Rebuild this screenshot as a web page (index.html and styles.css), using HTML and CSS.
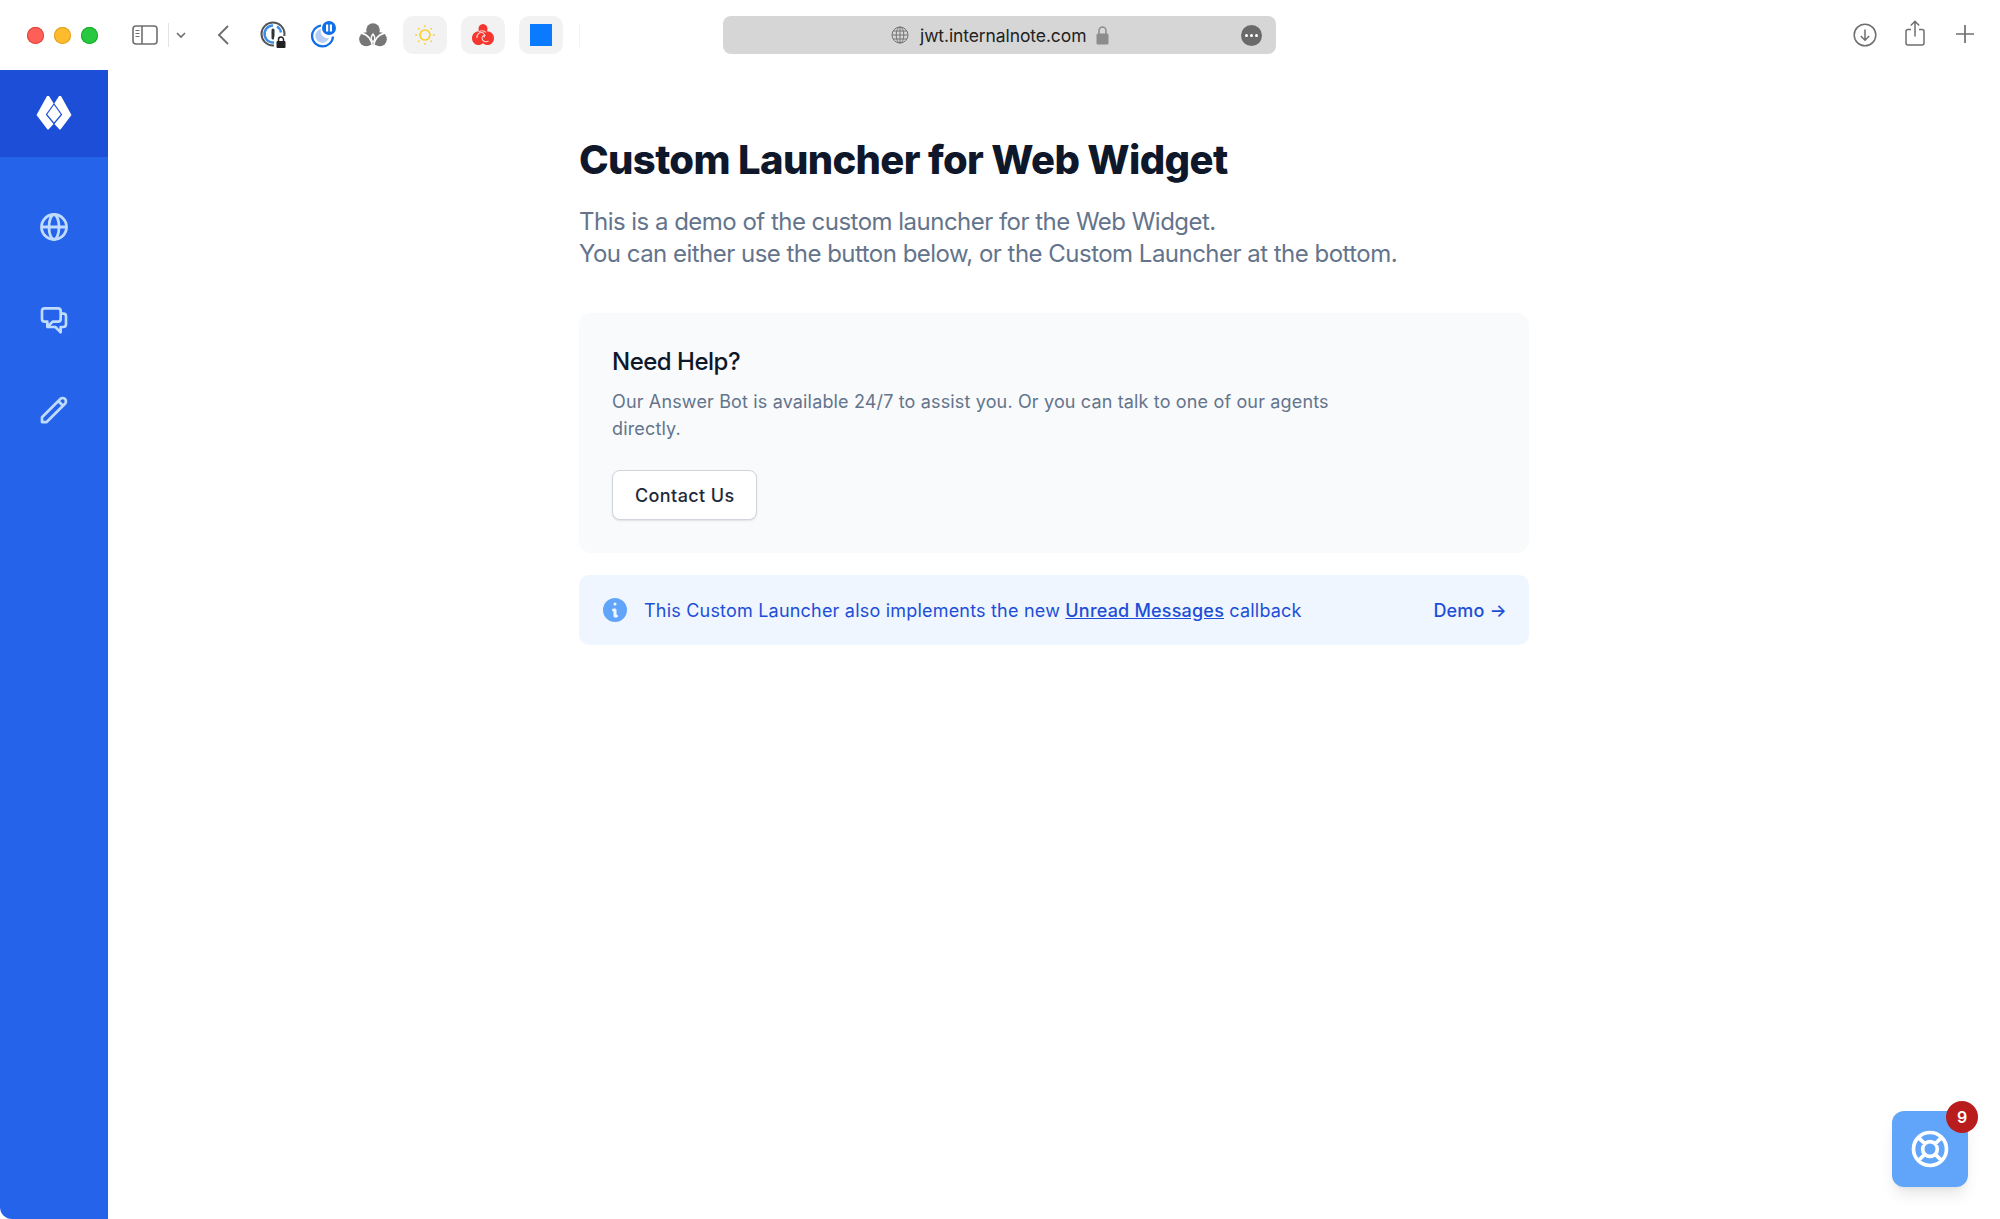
FILE: index.html
```html
<!DOCTYPE html>
<html lang="en">
<head>
<meta charset="utf-8">
<title>Custom Launcher for Web Widget</title>
<link rel="stylesheet" href="styles.css">
</head>
<body>
<header class="toolbar">
  <div class="lights">
    <span class="light light-red"></span>
    <span class="light light-yellow"></span>
    <span class="light light-green"></span>
  </div>
  <svg class="tb-sidebar" width="26" height="20" viewBox="0 0 26 20" fill="none" stroke="#6f6f6f" stroke-width="1.6">
    <rect x="1" y="1" width="24" height="18" rx="3"/><path d="M10 1v18"/><path d="M3.5 5.5h4M3.5 8.5h4M3.5 11.5h4" stroke-width="1.2"/>
  </svg>
  <span class="tb-divider"></span>
  <svg class="tb-chevron" width="10" height="7" viewBox="0 0 10 7" fill="none" stroke="#6f6f6f" stroke-width="1.6"><path d="M1 1l4 4 4-4"/></svg>
  <svg class="tb-back" width="12" height="20" viewBox="0 0 12 20" fill="none" stroke="#6f6f6f" stroke-width="1.9"><path d="M11 1L2 10l9 9"/></svg>
  <div class="extensions">
    <svg class="ext ext-pass" width="28" height="28" viewBox="0 0 28 28" fill="none">
      <circle cx="13" cy="13" r="11.5" stroke="#555" stroke-width="2"/>
      <path d="M13 4.5a8.500 8.500 0 1 0 4 16" stroke="#3b8ee8" stroke-width="2.400"/>
      <path d="M17 5.500a8.500 8.500 0 0 1 4 6" stroke="#3b8ee8" stroke-width="2.400"/>
      <rect x="11.500" y="7.500" width="3" height="11" rx="1.500" fill="#333"/>
      <rect x="14" y="15" width="14" height="13" rx="2" fill="#fff"/>
      <rect x="16.500" y="20" width="9" height="7" rx="1" fill="#222"/>
      <path d="M18.500 20v-1.500a2.500 2.500 0 0 1 5 0V20" stroke="#222" stroke-width="1.500"/>
    </svg>
    <svg class="ext ext-moon" width="28" height="28" viewBox="0 0 28 28" fill="none">
      <path d="M12 3.500a10.500 10.500 0 1 0 12 11" stroke="#0f6fe8" stroke-width="2.200" transform="translate(0 1)"/>
      <path d="M12 8a7 7 0 1 0 8 9 7 7 0 0 1-8-9z" fill="#b6cdf5"/>
      <circle cx="20" cy="7" r="7" fill="#0f6fe8"/>
      <rect x="17" y="3.500" width="2.200" height="7" fill="#fff"/><rect x="20.800" y="3.500" width="2.200" height="7" fill="#fff"/>
    </svg>
    <svg class="ext ext-leaf" width="28" height="24" viewBox="0 0 28 24" fill="#777">
      <circle cx="14" cy="7" r="6.800"/>
      <circle cx="7.200" cy="16.200" r="7"/>
      <circle cx="20.800" cy="16.200" r="7"/>
      <path fill="#777" d="M9 12h10v8l-5 3-5-3z"/>
      <path fill="none" stroke="#fff" stroke-width="1.500" d="M13.400 23.500C13 17 9 11.500 3 10.500M14.600 23.500C15 17 19 11.500 25 10.500"/>
      <path fill="none" stroke="#fff" stroke-width="1.300" d="M14 19c-2.500-2.500-2.500-5 0-8 2.500 3 2.500 5.500 0 8z"/>
    </svg>
    <span class="tile">
      <svg width="20" height="20" viewBox="0 0 20 20" fill="none" stroke="#fbcf33">
        <circle cx="10" cy="10" r="5" stroke-width="1.700"/>
        <path stroke-width="1.500" stroke-linecap="round" d="M10 .8v.8M10 18.400v.8M.8 10h.8M18.400 10h.8M3.500 3.500l.5.500M16 16l.5.500M3.500 16.500L4 16M16 4l.5-.5"/>
      </svg>
    </span>
    <span class="tile">
      <svg width="24" height="24" viewBox="0 0 24 24">
        <path fill="#f4362e" d="M12 1c2.800 0 4.500 2.200 4.500 4.700 0 1-.2 1.800-.5 2.600 4 .2 7 3 7 6.900 0 3.800-3 6.800-6.500 6.800-1.800 0-3.200-.6-4.500-1.800C10.700 21.400 9.300 22 7.500 22 4 22 1 19 1 15.200c0-3.900 3-6.700 7-6.900-.3-.8-.5-1.600-.5-2.600C7.500 3.200 9.200 1 12 1z"/>
        <path fill="none" stroke="#fbd3d0" stroke-width="1.100" d="M8 9c1.500-1.500 5-2 7 .5M6 15c-.5-3 2-6 5-5.500 2.500.5 3 3 2 5M17.500 18c-2.500 1.500-6 .5-6.500-2.500-.3-2 1.500-3.500 3.500-3"/>
      </svg>
    </span>
    <span class="tile"><span class="blue-square"></span></span>
  </div>
  <span class="tb-faint"></span>
  <div class="address">
    <svg class="addr-globe" width="18" height="18" viewBox="0 0 18 18" fill="none" stroke="#757575" stroke-width="1">
      <circle cx="9" cy="9" r="8"/><ellipse cx="9" cy="9" rx="3.800" ry="8"/><path d="M9 1v16M1 9h16M2 5h14M2 13h14"/>
    </svg>
    <span class="addr-text">jwt.internalnote.com</span>
    <svg class="addr-lock" width="13" height="19" viewBox="0 0 13 19" fill="none">
      <rect x="0.500" y="7.500" width="12" height="11" rx="1.500" fill="#8c8c8c"/>
      <path d="M3 8V4.500a3.500 3.500 0 0 1 7 0V8" stroke="#8c8c8c" stroke-width="1.500"/>
    </svg>
    <span class="addr-more"><i></i><i></i><i></i></span>
  </div>
  <div class="tb-right">
    <svg width="24" height="24" viewBox="0 0 24 24" fill="none" stroke="#6f6f6f" stroke-width="1.500">
      <circle cx="12" cy="12" r="10.800"/><path d="M12 6.500v10.500M7.800 13l4.200 4.200 4.200-4.200"/>
    </svg>
    <svg class="tb-share" width="20" height="26" viewBox="0 0 20 26" fill="none" stroke="#6f6f6f" stroke-width="1.500">
      <path d="M6 9.500H3a2 2 0 0 0-2 2V23a2 2 0 0 0 2 2h14a2 2 0 0 0 2-2V11.500a2 2 0 0 0-2-2h-3"/><path d="M10 16.500V1.500M5.800 5.500L10 1.300l4.200 4.200"/>
    </svg>
    <svg class="tb-plus" width="20" height="20" viewBox="0 0 20 20" fill="none" stroke="#6f6f6f" stroke-width="1.700"><path d="M10 1v18M1 10h18"/></svg>
  </div>
</header>

<div class="window">
  <aside class="sidebar">
    <div class="brand">
      <svg class="brand-mark" width="36" height="36" viewBox="0 0 36 36">
        <path fill="#fff" d="M11 1h2L18 9l5-8h2L35.500 20 24.500 34.500h-1L18 28.500l-5.500 6h-1L.5 20z"/>
        <path fill="none" stroke="#1d4ed8" stroke-width="1.200" stroke-linejoin="round" d="M18 9l7.500 10.500L18 28.500l-7.500-9z"/>
      </svg>
    </div>
    <nav class="nav">
      <a class="nav-item">
        <svg width="32" height="32" viewBox="0 0 32 32" fill="none" stroke="#bfdbfe" stroke-width="2.800">
          <circle cx="16" cy="16" r="12.500"/><ellipse cx="16" cy="16" rx="5" ry="12.500"/><path d="M3.500 16h25"/>
        </svg>
      </a>
      <a class="nav-item">
        <svg width="32" height="32" viewBox="0 0 24 24" fill="none" stroke="#bfdbfe" stroke-width="2" stroke-linecap="round" stroke-linejoin="round">
          <path d="M17 8h2a2 2 0 012 2v6a2 2 0 01-2 2h-2v4l-4-4H9a1.994 1.994 0 01-1.414-.586m0 0L11 14h4a2 2 0 002-2V6a2 2 0 00-2-2H5a2 2 0 00-2 2v6a2 2 0 002 2h2v4l.586-.586z"/>
        </svg>
      </a>
      <a class="nav-item">
        <svg width="32" height="32" viewBox="0 0 24 24" fill="none" stroke="#bfdbfe" stroke-width="2" stroke-linecap="round" stroke-linejoin="round">
          <path d="M15.232 5.232l3.536 3.536m-2.036-5.036a2.500 2.500 0 113.536 3.536L6.500 21.036H3v-3.572L16.732 3.732z"/>
        </svg>
      </a>
    </nav>
  </aside>

  <main class="content">
    <h1 class="title">Custom Launcher for Web Widget</h1>
    <p class="lead">This is a demo of the custom launcher for the Web Widget.<br>You can either use the button below, or the Custom Launcher at the bottom.</p>
    <section class="card">
      <h2 class="card-title">Need Help?</h2>
      <p class="card-text">Our Answer Bot is available 24/7 to assist you. Or you can talk to one of our agents directly.</p>
      <button class="btn" type="button">Contact Us</button>
    </section>
    <section class="banner">
      <svg class="banner-icon" width="24" height="24" viewBox="2 2 16 16" fill="#60a5fa">
        <path fill-rule="evenodd" clip-rule="evenodd" d="M18 10a8 8 0 11-16 0 8 8 0 0116 0zm-7-4a1 1 0 11-2 0 1 1 0 012 0zM9 9a1 1 0 000 2v3a1 1 0 001 1h1a1 1 0 100-2v-3a1 1 0 00-1-1H9z"/>
      </svg>
      <p class="banner-text">This Custom Launcher also implements the new <a class="banner-link">Unread Messages</a> callback</p>
      <a class="banner-demo">Demo →</a>
    </section>
  </main>
</div>

<button class="launcher" type="button">
  <svg width="44" height="44" viewBox="0 0 24 24" fill="none" stroke="#fff" stroke-width="2" stroke-linecap="round" stroke-linejoin="round">
    <path d="M18.364 5.636l-3.536 3.536m0 5.656l3.536 3.536M9.172 9.172L5.636 5.636m3.536 9.192l-3.536 3.536M21 12a9 9 0 11-18 0 9 9 0 0118 0zm-5 0a4 4 0 11-8 0 4 4 0 018 0z"/>
  </svg>
  <span class="launcher-badge">9</span>
</button>
</body>
</html>
```

FILE: styles.css
```css
* { box-sizing: border-box; }
html, body { margin: 0; height: 100%; }
body {
  display: flex;
  flex-direction: column;
  height: 1219px;
  overflow: hidden;
  background: #fff;
  font-family: Inter, "Liberation Sans", sans-serif;
}

/* Browser toolbar */
.toolbar {
  flex: 0 0 70px;
  display: flex;
  align-items: center;
  padding-left: 27px;
}
.lights { display: flex; gap: 10px; }
.light { width: 17px; height: 17px; border-radius: 50%; }
.light-red { background: #fe5f57; box-shadow: inset 0 0 0 1px #e0443e; }
.light-yellow { background: #febb2e; box-shadow: inset 0 0 0 1px #dea123; }
.light-green { background: #28c840; box-shadow: inset 0 0 0 1px #1aab29; }
.tb-sidebar { margin-left: 34px; }
.tb-divider { width: 1px; height: 24px; margin-left: 10px; background: #e3e3e3; }
.tb-chevron { margin-left: 7px; }
.tb-back { margin-left: 31px; }
.extensions { display: flex; align-items: center; margin-left: 31px; }
.ext-pass { margin-right: 21px; }
.ext-moon { margin-right: 22px; }
.ext-leaf { margin-right: 16px; }
.tile {
  width: 44px; height: 38px;
  margin-right: 14px;
  border-radius: 10px;
  background: #f2f2f2;
  display: flex; align-items: center; justify-content: center;
}
.blue-square { width: 22px; height: 22px; background: #0a7aff; }
.tb-faint { width: 1px; height: 24px; margin-left: 2px; background: #f4f4f4; }
.address {
  width: 553px; height: 38px;
  margin-left: 143px;
  border-radius: 8px;
  background: #d6d6d6;
  display: flex; align-items: center;
  padding-left: 168px;
  padding-right: 14px;
}
.addr-text { margin-left: 11px; font-size: 17.5px; color: #222; letter-spacing: -0.1px; }
.addr-lock { margin-left: 10px; }
.addr-more {
  width: 21px; height: 21px;
  margin-left: auto;
  border-radius: 50%;
  background: #6a6a6a;
  display: flex; align-items: center; justify-content: center; gap: 2px;
}
.addr-more i { width: 3px; height: 3px; border-radius: 50%; background: #fff; }
.tb-right {
  margin-left: auto;
  display: flex; align-items: center;
  gap: 28px;
  padding-right: 25px;
}
.tb-share { margin-bottom: 4px; }
.tb-plus { margin-left: 2px; margin-bottom: 2px; }

/* Window */
.window { flex: 1; display: flex; min-height: 0; }
.sidebar {
  flex: 0 0 108px;
  background: #2563eb;
  border-bottom-left-radius: 12px;
  overflow: hidden;
}
.brand {
  height: 87px;
  background: #1d4ed8;
  display: flex; align-items: center; justify-content: center;
}
.brand-mark { margin-bottom: 1px; }
.nav { display: flex; flex-direction: column; align-items: center; gap: 59.5px; padding-top: 54px; }
.nav-item { display: block; height: 32px; }

/* Content */
.content { flex: 1; padding: 0 0 0 471px; }
.title {
  margin: 64px 0 0;
  font-size: 40px; line-height: 52px; font-weight: 800;
  letter-spacing: -0.65px;
  color: #0f172a;
}
.lead {
  margin: 20px 0 0;
  font-size: 24px; line-height: 32px;
  letter-spacing: -0.52px;
  color: #64748b;
}
.card {
  width: 950px;
  margin-top: 43px;
  padding: 33px 33px 33px;
  border-radius: 12px;
  background: #f8fafc;
}
.card-title {
  margin: 0;
  font-size: 24px; line-height: 32px; font-weight: 500;
  letter-spacing: -0.5px;
  color: #0f172a;
}
.card-text {
  max-width: 768px;
  margin: 10px 0 0;
  font-size: 18px; line-height: 27px;
  letter-spacing: 0.15px;
  color: #64748b;
}
.btn {
  display: block;
  margin-top: 28px;
  height: 50px; padding: 0 22px;
  border: 1px solid #d1d5db;
  border-radius: 8px;
  background: #fff;
  box-shadow: 0 1px 2px rgba(0,0,0,.1);
  font: 500 18px Inter, sans-serif;
  letter-spacing: 0.38px;
  color: #1e293b;
}
.banner {
  width: 950px; height: 70px;
  margin-top: 22px;
  padding: 0 22px 0 24px;
  border-radius: 10px;
  background: #eff6ff;
  display: flex; align-items: center;
  font-size: 18px; color: #1d4ed8;
  letter-spacing: 0.2px;
}
.banner-text { margin: 0 0 0 17px; flex: 1; }
.banner-link { text-decoration: underline; font-weight: 500; }
.banner-demo { font-weight: 500; }

/* Launcher */
.launcher {
  position: fixed;
  left: 1892px; top: 1111px;
  width: 76px; height: 76px;
  padding: 0; border: 0;
  border-radius: 12px;
  background: #60a5fa;
  box-shadow: 0 10px 15px -3px rgba(0,0,0,.1), 0 4px 6px -2px rgba(0,0,0,.05);
  display: flex; align-items: center; justify-content: center;
}
.launcher-badge {
  position: absolute;
  right: -10px; top: -10px;
  width: 32px; height: 32px;
  border-radius: 50%;
  background: #b91c1c;
  color: #fff;
  font: 600 16px/32px Inter, sans-serif;
  text-align: center;
}
```
